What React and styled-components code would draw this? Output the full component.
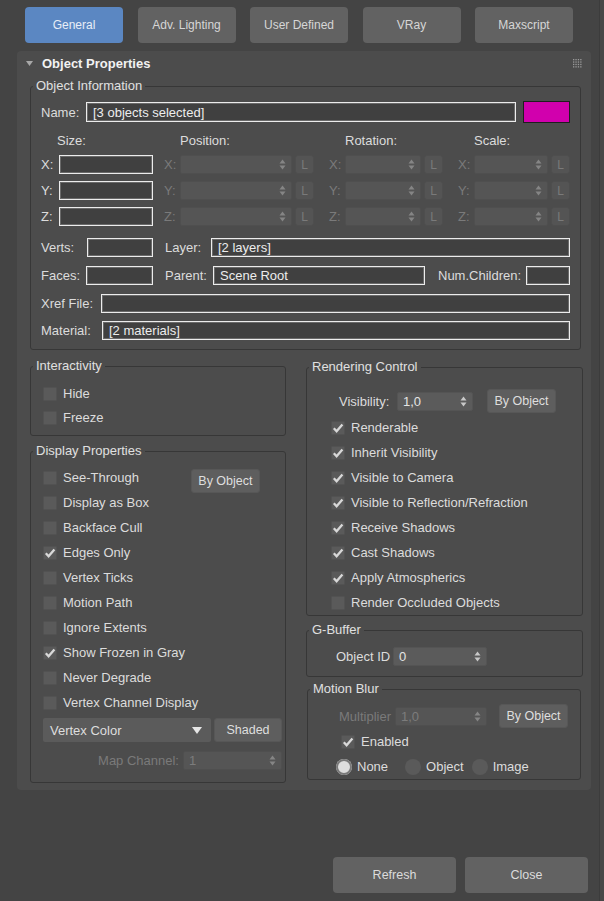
import React from 'react'
import styled, { createGlobalStyle } from 'styled-components'

const GlobalStyle = createGlobalStyle`
  * { box-sizing: border-box; }
  html, body { margin: 0; padding: 0; background: #444444; }
  body {
    font-family: 'Liberation Sans', Arial, sans-serif;
    font-size: 13px;
    color: #dcdcdc;
  }
`

const Page = styled.div`
  width: 604px;
  height: 901px;
  display: flex;
  overflow: hidden;
  background: #444444;
`

const Main = styled.div`
  width: 591px;
  display: flex;
  flex-direction: column;
  padding: 7px 0 0 17px;
`

const Edge = styled.div`
  flex: 1;
  margin-left: 8px;
  border-left: 1px solid #3c3c3c;
  background: #474747;
`

const Tabs = styled.div`
  display: flex;
  gap: 14.5px;
  padding-left: 8px;
`

const Tab = styled.div`
  width: 98px;
  height: 36px;
  border-radius: 4px;
  display: flex;
  align-items: center;
  justify-content: center;
  font-size: 12px;
  color: ${p => (p.$active ? '#e8eef7' : '#d6d6d6')};
  background: ${p => (p.$active ? '#5b87c2' : '#626262')};
`

const Rollout = styled.div`
  margin-top: 8px;
  width: 574px;
  height: 739px;
  background: #4c4c4c;
  border-radius: 4px;
  display: flex;
  flex-direction: column;
`

const RolloutHeader = styled.div`
  height: 24px;
  display: flex;
  align-items: center;
  padding: 0 9px;
`

const HeaderTitle = styled.div`
  flex: 1;
  margin-left: 9px;
  font-weight: bold;
  font-size: 13px;
  color: #f2f2f2;
`

const RolloutBody = styled.div`
  padding: 4px 10px 0 13px;
  display: flex;
  flex-direction: column;
`

const Group = styled.fieldset`
  margin: ${p => p.$m || '0'};
  padding: 0;
  min-width: 0;
  border: 1px solid #373737;
  border-radius: 3px;
`

const Legend = styled.legend`
  margin-left: 2px;
  padding: 0 3px;
  font-size: 13px;
  line-height: 14px;
  color: #e0e0e0;
`

const GroupBody = styled.div`
  padding: ${p => p.$pad};
  display: flex;
  flex-direction: column;
`

const Row = styled.div`
  display: flex;
  align-items: center;
  height: ${p => p.$h || 19}px;
  margin-top: ${p => p.$mt || 0}px;
  padding-left: ${p => p.$pl || 0}px;
`

const Label = styled.span`
  flex: none;
  width: ${p => (p.$w ? `${p.$w}px` : 'auto')};
  margin-right: ${p => p.$mr || 0}px;
  margin-left: ${p => p.$ml || 0}px;
  text-align: ${p => p.$align || 'left'};
  color: ${p => (p.$dim ? '#7a7a7a' : '#dcdcdc')};
  white-space: nowrap;
`

const Field = styled.div`
  height: ${p => p.$h || 19}px;
  flex: ${p => (p.$w ? 'none' : '1')};
  width: ${p => (p.$w ? `${p.$w}px` : 'auto')};
  min-width: 0;
  border: 1px solid #ececec;
  box-shadow: inset 0 0 0 1px #6a6a6a;
  background: #404040;
  padding: 0 6px;
  display: flex;
  align-items: center;
  color: #ededed;
  white-space: nowrap;
`

const Swatch = styled.div`
  width: 47px;
  height: 22px;
  margin-left: 7px;
  background: #d100ad;
  border: 1px solid #1e1e1e;
`

const XformRow = styled.div`
  display: flex;
  margin-top: 11px;
`

const XformCol = styled.div`
  width: ${p => p.$w}px;
  margin-left: ${p => p.$ml || 0}px;
  display: flex;
  flex-direction: column;
  gap: 7px;
`

const ColHead = styled.div`
  height: 14px;
  line-height: 14px;
  padding-left: 16px;
`

const SpinBox = styled.div`
  display: flex;
  align-items: center;
  height: 19px;
  flex: ${p => (p.$w ? 'none' : '1')};
  width: ${p => (p.$w ? `${p.$w}px` : 'auto')};
  padding: 0 5px 0 5px;
  border-radius: 2px;
  background: ${p => (p.$dim ? '#555555' : '#5b5b5b')};
  border: 1px solid ${p => (p.$dim ? '#4f4f4f' : '#545454')};
  color: ${p => (p.$dim ? '#7c7c7c' : '#e4e4e4')};
`

const SpinValue = styled.span`
  flex: 1;
`

const LockBtn = styled.div`
  flex: none;
  width: 19px;
  height: 19px;
  margin-left: 3px;
  border-radius: 3px;
  background: #545454;
  border: 1px solid #4e4e4e;
  color: #7a7a7a;
  display: flex;
  align-items: center;
  justify-content: center;
  font-size: 12px;
`

const Columns = styled.div`
  display: grid;
  grid-template-columns: 256px 277px;
  column-gap: 20px;
  margin-top: 9px;
  align-items: start;
`

const Column = styled.div`
  display: flex;
  flex-direction: column;
  padding-top: ${p => p.$pt || 0}px;
`

const CheckRow = styled.div`
  display: flex;
  align-items: center;
  height: ${p => p.$h || 25}px;
  margin-top: ${p => p.$mt || 0}px;
  padding-left: ${p => p.$pl || 0}px;
`

const Box = styled.span`
  flex: none;
  width: 14px;
  height: 14px;
  margin-right: 6px;
  background: #5a5a5a;
  border: 1px solid #525252;
  border-radius: 1px;
  display: flex;
  align-items: center;
  justify-content: center;
`

const Button = styled.div`
  flex: none;
  width: ${p => p.$w || 69}px;
  height: ${p => p.$h || 24}px;
  margin-left: ${p => p.$ml || 0}px;
  margin-top: ${p => p.$mt || 0}px;
  align-self: ${p => (p.$top ? 'flex-start' : 'center')};
  border-radius: 3px;
  background: #5e5e5e;
  border: 1px solid #575757;
  display: flex;
  align-items: center;
  justify-content: center;
  font-size: 12.5px;
  color: #dedede;
`

const Dropdown = styled.div`
  width: 169px;
  height: 24px;
  background: #5b5b5b;
  border-radius: 2px;
  display: flex;
  align-items: center;
  padding: 0 9px 0 7px;
  color: #dedede;
`

const DropText = styled.span`
  flex: 1;
`

const RadioRow = styled.div`
  display: flex;
  align-items: center;
  height: 25px;
  padding-left: 28px;
`

const Radio = styled.span`
  flex: none;
  width: 16px;
  height: 16px;
  border-radius: 50%;
  margin: 0 5px 0 ${p => p.$ml || 0}px;
  background: ${p => (p.$on ? '#dedede' : '#5a5a5a')};
  box-shadow: ${p => (p.$on ? 'inset 0 0 0 2px #7a7a7a' : 'none')};
`

const Footer = styled.div`
  display: flex;
  justify-content: flex-end;
  gap: 9px;
  margin-top: 67px;
  padding-right: 3px;
`

const BigButton = styled.div`
  width: 123px;
  height: 36px;
  border-radius: 4px;
  background: #626262;
  display: flex;
  align-items: center;
  justify-content: center;
  font-size: 12.5px;
  color: #dcdcdc;
`

const Arrows = ({ dim }) => (
  <svg width="7" height="11" viewBox="0 0 7 11">
    <path d="M0.5 4.5 L3.5 0.5 L6.5 4.5 Z M0.5 6.5 L6.5 6.5 L3.5 10.5 Z" fill={dim ? '#858585' : '#c8c8c8'} />
  </svg>
)

const Spinner = ({ value, dim, w }) => (
  <SpinBox $dim={dim} $w={w}>
    <SpinValue>{value}</SpinValue>
    <Arrows dim={dim} />
  </SpinBox>
)

const Tick = () => (
  <svg width="12" height="12" viewBox="0 0 12 12">
    <path d="M1.8 6.2 L4.6 9.2 L10.4 2.4" stroke="#d8d8d8" strokeWidth="2.3" fill="none" />
  </svg>
)

const Check = ({ on, label, pl, mt }) => (
  <CheckRow $pl={pl} $mt={mt}>
    <Box>{on && <Tick />}</Box>
    {label}
  </CheckRow>
)

const Grip = () => (
  <svg width="9" height="9" viewBox="0 0 9 9">
    {[0, 1, 2, 3].map(r =>
      [0, 1, 2, 3].map(c => <rect key={`${r}-${c}`} x={c * 2.4} y={r * 2.4} width="1.3" height="1.3" fill="#9a9a9a" />)
    )}
  </svg>
)

const Collapse = () => (
  <svg width="7" height="5" viewBox="0 0 7 5">
    <path d="M0 0 L7 0 L3.5 5 Z" fill="#a8a8a8" />
  </svg>
)

const AxisRow = ({ axis }) => (
  <Row>
    <Label $w={16} $dim>{axis}:</Label>
    <Spinner dim value="" />
    <LockBtn>L</LockBtn>
  </Row>
)

const displayChecks = [
  ['Display as Box', false],
  ['Backface Cull', false],
  ['Edges Only', true],
  ['Vertex Ticks', false],
  ['Motion Path', false],
  ['Ignore Extents', false],
  ['Show Frozen in Gray', true],
  ['Never Degrade', false],
  ['Vertex Channel Display', false],
]

const renderChecks = [
  ['Renderable', true],
  ['Inherit Visibility', true],
  ['Visible to Camera', true],
  ['Visible to Reflection/Refraction', true],
  ['Receive Shadows', true],
  ['Cast Shadows', true],
  ['Apply Atmospherics', true],
  ['Render Occluded Objects', false],
]

const App = () => {
  return (
    <Page>
      <GlobalStyle />
      <Main>
        <Tabs>
          <Tab $active>General</Tab>
          <Tab>Adv. Lighting</Tab>
          <Tab>User Defined</Tab>
          <Tab>VRay</Tab>
          <Tab>Maxscript</Tab>
        </Tabs>

        <Rollout>
          <RolloutHeader>
            <Collapse />
            <HeaderTitle>Object Properties</HeaderTitle>
            <Grip />
          </RolloutHeader>

          <RolloutBody>
            <Group>
              <Legend>Object Information</Legend>
              <GroupBody $pad="8px 10px 9px 10px">
                <Row $h={22}>
                  <Label $w={45}>Name:</Label>
                  <Field $h={20}>[3 objects selected]</Field>
                  <Swatch />
                </Row>

                <XformRow>
                  <XformCol $w={112}>
                    <ColHead>Size:</ColHead>
                    {['X', 'Y', 'Z'].map(a => (
                      <Row key={a}>
                        <Label $mr={6}>{a}:</Label>
                        <Field />
                      </Row>
                    ))}
                  </XformCol>
                  <XformCol $w={150} $ml={11}>
                    <ColHead>Position:</ColHead>
                    {['X', 'Y', 'Z'].map(a => <AxisRow key={a} axis={a} />)}
                  </XformCol>
                  <XformCol $w={114} $ml={15}>
                    <ColHead>Rotation:</ColHead>
                    {['X', 'Y', 'Z'].map(a => <AxisRow key={a} axis={a} />)}
                  </XformCol>
                  <XformCol $w={112} $ml={15}>
                    <ColHead>Scale:</ColHead>
                    {['X', 'Y', 'Z'].map(a => <AxisRow key={a} axis={a} />)}
                  </XformCol>
                </XformRow>

                <Row $mt={12}>
                  <Label $w={46}>Verts:</Label>
                  <Field $w={66} />
                  <Label $w={46} $ml={12}>Layer:</Label>
                  <Field>[2 layers]</Field>
                </Row>
                <Row $mt={9}>
                  <Label $w={45}>Faces:</Label>
                  <Field $w={67} />
                  <Label $w={48} $ml={12}>Parent:</Label>
                  <Field $w={212}>Scene Root</Field>
                  <Label $w={88} $ml={13}>Num.Children:</Label>
                  <Field />
                </Row>
                <Row $mt={9}>
                  <Label $w={60}>Xref File:</Label>
                  <Field />
                </Row>
                <Row $mt={8}>
                  <Label $w={61}>Material:</Label>
                  <Field>[2 materials]</Field>
                </Row>
              </GroupBody>
            </Group>

            <Columns>
              <Column>
                <Group>
                  <Legend>Interactivity</Legend>
                  <GroupBody $pad="8px 3px 5px 12px">
                    <Check label="Hide" />
                    <Check label="Freeze" mt={-1} />
                  </GroupBody>
                </Group>

                <Group $m="8px 0 0 0">
                  <Legend>Display Properties</Legend>
                  <GroupBody $pad="7px 3px 12px 12px">
                    <CheckRow>
                      <Box />
                      See-Through
                      <Button $top $mt={4} $ml={52}>By Object</Button>
                    </CheckRow>
                    {displayChecks.map(([label, on]) => (
                      <Check key={label} label={label} on={on} />
                    ))}
                    <Row $h={24} $mt={3}>
                      <Dropdown>
                        <DropText>Vertex Color</DropText>
                        <svg width="10" height="7" viewBox="0 0 10 7">
                          <path d="M0 0 L10 0 L5 7 Z" fill="#e6e6e6" />
                        </svg>
                      </Dropdown>
                      <Button $w={68} $ml={3}>Shaded</Button>
                    </Row>
                    <Row $mt={9}>
                      <Label $w={136} $align="right" $mr={4} $dim>Map Channel:</Label>
                      <Spinner dim value="1" />
                    </Row>
                  </GroupBody>
                </Group>
              </Column>

              <Column $pt={1}>
                <Group>
                  <Legend>Rendering Control</Legend>
                  <GroupBody $pad="15px 3px 0 24px">
                    <Row $h={24} $pl={8}>
                      <Label $w={58}>Visibility:</Label>
                      <Spinner value="1,0" w={76} />
                      <Button $ml={14}>By Object</Button>
                    </Row>
                    {renderChecks.map(([label, on], i) => (
                      <Check key={label} label={label} on={on} mt={i === 0 ? 2 : 0} />
                    ))}
                  </GroupBody>
                </Group>

                <Group $m="7px 0 0 0">
                  <Legend>G-Buffer</Legend>
                  <GroupBody $pad="10px 3px 10px 29px">
                    <Row>
                      <Label $w={57}>Object ID</Label>
                      <Spinner value="0" w={94} />
                    </Row>
                  </GroupBody>
                </Group>

                <Group $m="5px 2px 0 1px">
                  <Legend>Motion Blur</Legend>
                  <GroupBody $pad="8px 3px 0 0">
                    <Row $h={24} $pl={31}>
                      <Label $w={56} $dim>Multiplier</Label>
                      <Spinner dim value="1,0" w={92} />
                      <Button $ml={12}>By Object</Button>
                    </Row>
                    <Check label="Enabled" on pl={33} mt={1} />
                    <RadioRow>
                      <Radio $on />
                      None
                      <Radio $ml={17} />
                      Object
                      <Radio $ml={8} />
                      Image
                    </RadioRow>
                  </GroupBody>
                </Group>
              </Column>
            </Columns>
          </RolloutBody>
        </Rollout>

        <Footer>
          <BigButton>Refresh</BigButton>
          <BigButton>Close</BigButton>
        </Footer>
      </Main>
      <Edge />
    </Page>
  )
}

export default App
